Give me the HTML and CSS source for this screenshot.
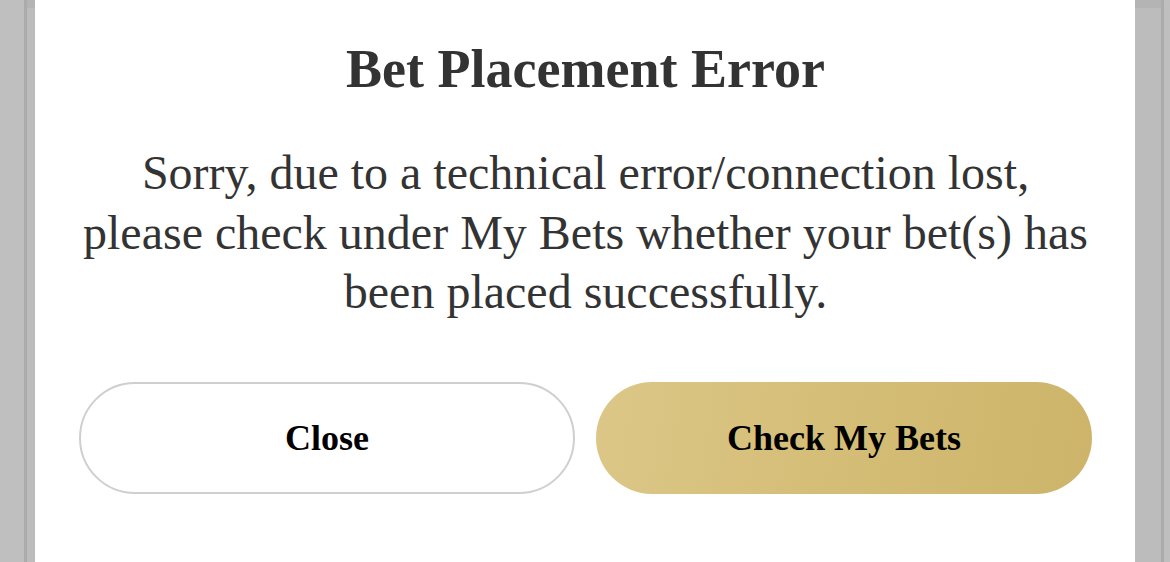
FILE: index.html
```html
<!DOCTYPE html>
<html lang="en">
<head>
  <meta charset="UTF-8" />
  <meta name="viewport" content="width=device-width, initial-scale=1.0" />
  <title>Bet Placement Error</title>
  <link rel="stylesheet" href="styles.css">
</head>
<body>
  <div class="backdrop">
    <div class="dialog" role="alertdialog" aria-labelledby="dialogTitle">
      <h1 id="dialogTitle">Bet Placement Error</h1>
      <p class="message">Sorry, due to a technical error/connection lost, please check under My Bets whether your bet(s) has been placed successfully.</p>
      <div class="actions">
        <button type="button" class="btn btn-outline">Close</button>
        <button type="button" class="btn btn-gold">Check My Bets</button>
      </div>
    </div>
  </div>
</body>
</html>
```

FILE: styles.css
```css
/* Dimmed page behind the dialog */
body {
  margin: 0;
  padding: 0;
  background-color: #bfbfbf;
  font-family: 'Liberation Serif', 'Times New Roman', serif;
  height: 562px;
  overflow: hidden;
}

.backdrop {
  height: 100%;
  margin: 0 6px 0 24px;
  border-left: 3px solid #ababab;
  border-right: 3px solid #ababab;
  background: linear-gradient(#b4b4b4 0 8px, #bcbcbc 8px);
  padding: 0 26px 0 8px;
}

/* Dialog box */
.dialog {
  background-color: #fff;
  height: 100%;
  box-sizing: border-box;
  padding: 37px 43px 0 44px;
  text-align: center;
  color: #333;
}

.dialog h1 {
  margin: 0;
  font-size: 54px;
  line-height: 64px;
  font-weight: bold;
}

.message {
  margin: 42px 0 0;
  font-size: 48px;
  line-height: 59.5px;
}

/* Buttons */
.actions {
  display: grid;
  grid-template-columns: 1fr 1fr;
  gap: 21px;
  margin-top: 60px;
}

.btn {
  box-sizing: border-box;
  width: 100%;
  height: 112px;
  border-radius: 56px;
  font-family: inherit;
  font-size: 36px;
  font-weight: bold;
  color: #000;
  cursor: pointer;
}

.btn-outline {
  background-color: #fff;
  border: 2.5px solid #cfcfcf;
}

.btn-gold {
  border: none;
  background: linear-gradient(100deg, #dcc788 0%, #d4bd76 50%, #cdb46a 100%);
}
```
